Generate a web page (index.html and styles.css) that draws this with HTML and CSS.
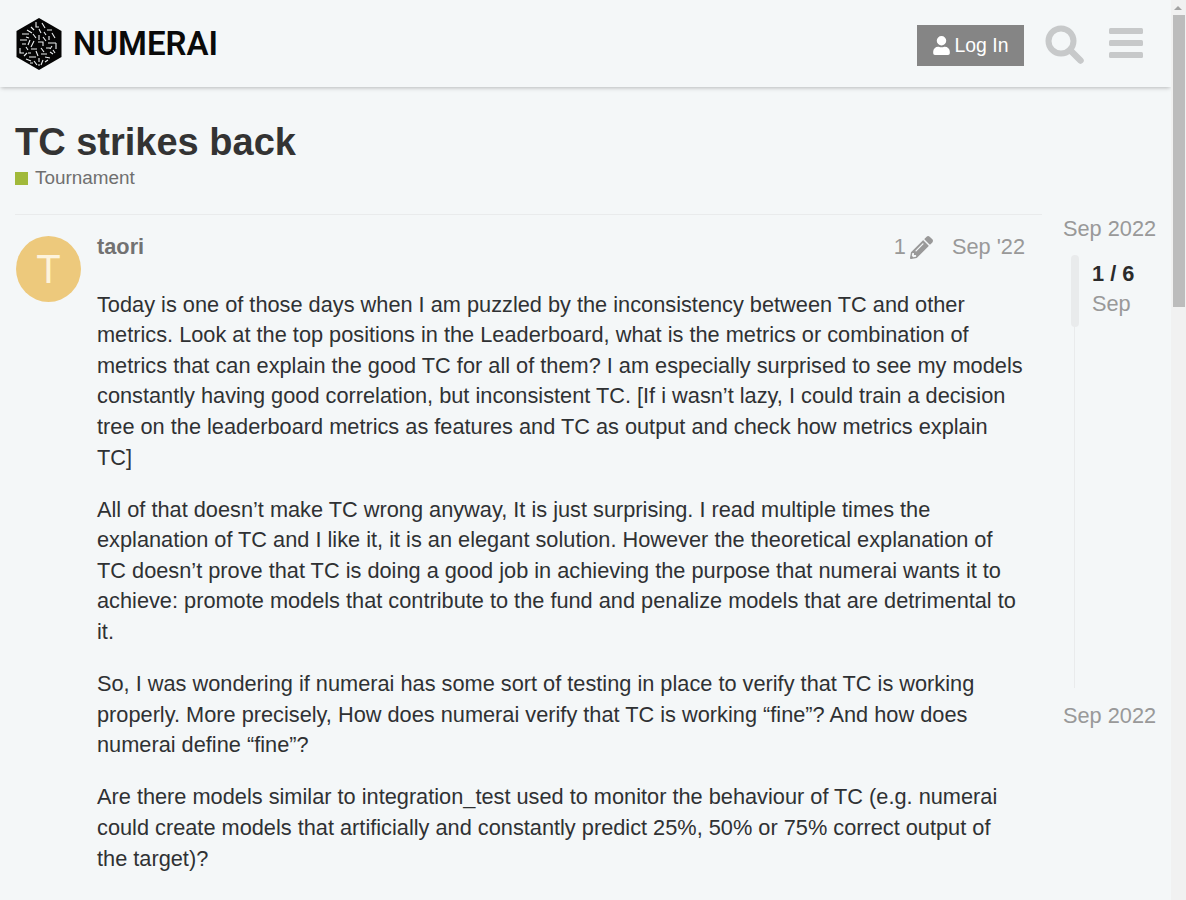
FILE: index.html
```html
<!DOCTYPE html>
<html lang="en">
<head>
<meta charset="utf-8">
<title>TC strikes back</title>
<link rel="stylesheet" href="styles.css">
</head>
<body>
<div class="viewport">
<header class="site-header">
  <a class="logo">
    <svg class="logo-mark" width="48" height="54" viewBox="0 0 48 54">
      <polygon points="24,1 46.500,14 46.500,40 24,53 1.500,40 1.500,14" fill="#050505"/>
      <path d="M21 5v5h3M27 6l3 5M24 12l2 4M16 10l3 3M12 13l5 3M32 13h5M29 15l2 3M37 16l3 5M7 17h7M18 17l3 4M24 18v5M34 19v4M11 20l3 1M28 20l3 4M5 23h7M15 23l-2 5M19 24l-3 6M23 25h5v4M33 26h8M41 26v6M7 27h4M37 29l-2 3M5 31v5h4M11 30l2 3M16 32h6M26 31l3 4M31 31h4M21 34l2 5M12 36l-3 3M16 36h-3M26 37h6M35 35l3 2M38 33l2 3M14 40h7M30 40l5 1M11 42l5 2M24 41v4M19 44l3 4M28 43l-2 5M33 43l-3 2M15 46h3M23 48h2" fill="none" stroke="#eef1f2" stroke-width="1.100"/>
    </svg>
    <span class="logo-text">NUMERAI</span>
  </a>
  <div class="header-actions">
    <button class="login">
      <svg width="17" height="19" viewBox="0 0 448 512"><path fill="#fff" d="M224 256a128 128 0 1 0 0-256 128 128 0 0 0 0 256zm89.600 32h-16.700a174.100 174.100 0 0 1-145.800 0h-16.700A134.400 134.400 0 0 0 0 422.400V464a48 48 0 0 0 48 48h352a48 48 0 0 0 48-48v-41.600A134.400 134.400 0 0 0 313.600 288z"/></svg>
      <span>Log In</span>
    </button>
    <svg class="icon-search" width="39" height="39" viewBox="0 0 39 39"><circle cx="16" cy="16" r="12.500" fill="none" stroke="#c7c9ca" stroke-width="6"/><path d="M25 25l10.500 10.500" stroke="#c7c9ca" stroke-width="6.500" stroke-linecap="round"/></svg>
    <svg class="icon-menu" width="34" height="31" viewBox="0 0 34 31"><g fill="#c7c9ca"><rect y="0" width="34" height="6" rx="1.500"/><rect y="12" width="34" height="6" rx="1.500"/><rect y="24" width="34" height="6" rx="1.500"/></g></svg>
  </div>
</header>
<main class="page">
  <div class="title-block">
    <h1>TC strikes back</h1>
    <div class="category"><span class="swatch"></span><span>Tournament</span></div>
  </div>
  <div class="topic">
    <article class="post">
      <div class="avatar">T</div>
      <div class="post-body">
        <div class="post-meta">
          <span class="author">taori</span>
          <span class="edits">1
            <svg width="23" height="23" viewBox="0 0 512 512"><path fill="#999" d="M497.900 142.100l-46.100 46.100c-4.700 4.700-12.300 4.700-17 0l-111-111c-4.700-4.700-4.700-12.300 0-17l46.100-46.100c18.700-18.700 49.100-18.700 67.900 0l60.100 60.100c18.800 18.700 18.800 49.100 0 67.900zM284.200 99.800L21.600 362.400.4 483.900c-2.900 16.400 11.400 30.600 27.800 27.800l121.500-21.300 262.600-262.600c4.700-4.700 4.700-12.300 0-17l-111-111c-4.800-4.700-12.400-4.700-17.100 0zM124.100 339.900c-5.500-5.500-5.500-14.300 0-19.800l154-154c5.500-5.500 14.300-5.500 19.800 0s5.500 14.300 0 19.800l-154 154c-5.500 5.500-14.300 5.500-19.800 0zM88 424h48v36.300l-64.500 11.300-31.100-31.100L51.700 376H88v48z"/></svg>
          </span>
          <span class="date">Sep '22</span>
        </div>
        <div class="cooked">
          <p>Today is one of those days when I am puzzled by the inconsistency between TC and other metrics. Look at the top positions in the Leaderboard, what is the metrics or combination of metrics that can explain the good TC for all of them? I am especially surprised to see my models constantly having good correlation, but inconsistent TC. [If i wasn’t lazy, I could train a decision tree on the leaderboard metrics as features and TC as output and check how metrics explain TC]</p>
          <p>All of that doesn’t make TC wrong anyway, It is just surprising. I read multiple times the explanation of TC and I like it, it is an elegant solution. However the theoretical explanation of TC doesn’t prove that TC is doing a good job in achieving the purpose that numerai wants it to achieve: promote models that contribute to the fund and penalize models that are detrimental to it.</p>
          <p>So, I was wondering if numerai has some sort of testing in place to verify that TC is working properly. More precisely, How does numerai verify that TC is working “fine”? And how does numerai define “fine”?</p>
          <p>Are there models similar to integration_test used to monitor the behaviour of TC (e.g. numerai could create models that artificially and constantly predict 25%, 50% or 75% correct output of the target)?</p>
        </div>
      </div>
    </article>
    <aside class="timeline">
      <div class="tl-date tl-first">Sep 2022</div>
      <div class="tl-track">
        <div class="tl-handle"></div>
        <div class="tl-info"><strong>1 / 6</strong><span>Sep</span></div>
      </div>
      <div class="tl-date">Sep 2022</div>
    </aside>
  </div>
</main>
</div>
<div class="scrollbar"><span class="sb-arrow"></span><span class="sb-thumb"></span></div>
</body>
</html>
```
FILE: styles.css
```css
html { background: #f4f7f8; }
body { margin: 0; height: 900px; overflow: hidden; font-family: "Liberation Sans", Arial, sans-serif; color: #2b2b2b; background: #f4f7f8; display: flex; }
.viewport { width: 1171px; flex: none; }
.scrollbar { flex: none; width: 15px; height: 900px; box-sizing: border-box; padding: 6px 1px 0 2px; background: #f1f1f1; display: flex; flex-direction: column; align-items: stretch; }
.sb-arrow { align-self: center; width: 0; height: 0; margin-right: 2px; border-left: 4px solid transparent; border-right: 4px solid transparent; border-bottom: 4px solid #a3a3a3; }
.sb-thumb { margin-top: 5px; height: 292px; background: #bcbcbc; }
.site-header { display: flex; align-items: center; justify-content: space-between; height: 87px; padding: 0 28px 0 15px; box-sizing: border-box; background: #f4f7f8; box-shadow: 0 2px 4px -1px rgba(0,0,0,.25); }
.logo { display: flex; align-items: center; gap: 10px; }
.logo-mark { display: block; margin-top: 1px; }
.logo-text { font-family: "Roboto", sans-serif; font-weight: 600; font-size: 33px; color: #0a0a0a; line-height: 1; }
.header-actions { display: flex; align-items: center; }
.login { display: flex; align-items: center; gap: 5px; width: 107px; height: 41px; justify-content: center; padding: 0; border: 0; margin-top: 3px; background: #858585; color: #fff; font: 19.400px "Liberation Sans", sans-serif; }
.icon-search { margin-left: 21px; margin-top: 1px; }
.icon-menu { margin-left: 25px; }
.page { padding: 0 15px; }
.title-block { padding-top: 33px; height: 94px; }
h1 { margin: 0; font-size: 38px; line-height: 44px; font-weight: 700; color: #333; }
.category { display: flex; align-items: center; gap: 7px; margin-top: 2px; font-size: 18.900px; line-height: 24px; color: #6f6f6f; }
.swatch { width: 13px; height: 13px; background: #a1b93a; }
.topic { display: flex; align-items: flex-start; }
.post { display: flex; width: 1027px; flex: none; box-sizing: border-box; border-top: 1px solid #e9ebec; padding: 21px 17px 0 1px; }
.avatar { flex: none; width: 65px; height: 66px; border-radius: 50%; background: #edc97c; color: #fdf3dc; font-size: 40px; line-height: 66px; text-align: center; }
.post-body { margin-left: 16px; flex: 1; min-width: 0; }
.post-meta { display: flex; align-items: center; height: 22px; font-size: 21.760px; color: #999; }
.author { font-weight: 700; color: #727272; margin-right: auto; }
.edits { display: flex; align-items: center; gap: 4px; margin-right: 19px; }
.cooked { margin-top: 31.600px; font-size: 21.760px; line-height: 30.600px; color: #2f3133; }
.cooked p { margin: 0 0 21.500px; }
.timeline { margin-left: 21px; width: 108px; flex: none; font-size: 21.760px; color: #999; white-space: nowrap; }
.tl-date { line-height: 28px; }
.tl-first { margin-top: 1px; }
.tl-track { position: relative; height: 433px; margin: 12px 0 14px 11px; border-left: 1px solid #e9ebec; }
.tl-handle { position: absolute; left: -4px; top: 0; width: 8px; height: 72px; border-radius: 4px; background: #e9ebec; }
.tl-info { display: flex; flex-direction: column; padding: 4px 0 0 17px; line-height: 30px; }
.tl-info strong { color: #2b2b2b; }
```
